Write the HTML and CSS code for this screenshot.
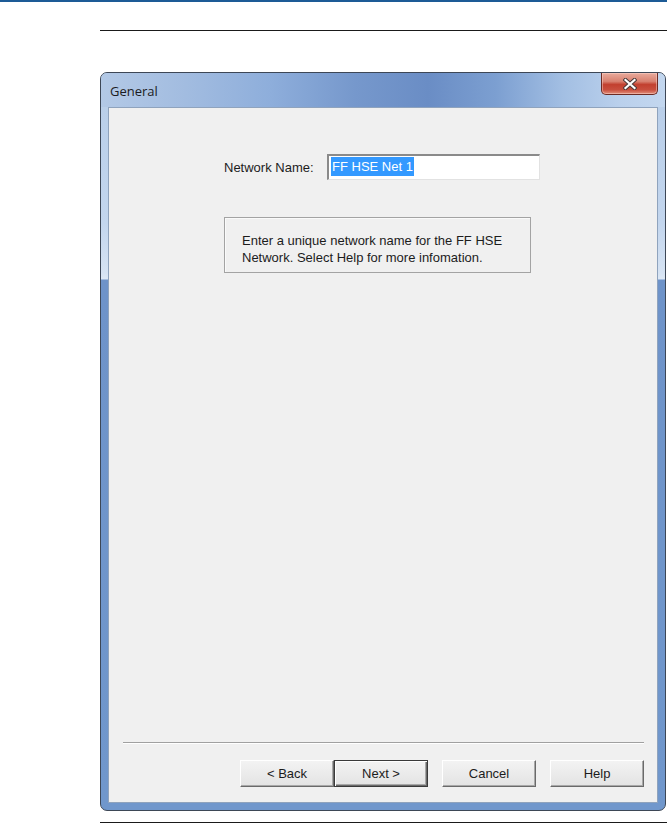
FILE: index.html
```html
<!DOCTYPE html>
<html>
<head>
<meta charset="utf-8">
<link rel="stylesheet" href="styles.css">
</head>
<body>
<div class="topbar"></div>
<div class="rule rule-top"></div>
<div class="window">
  <div class="titlebar">
    <span class="title">General</span>
    <div class="close">
      <svg width="14" height="12" viewBox="0 0 14 12">
        <path d="M2.5 2 L11.5 10 M11.5 2 L2.5 10" stroke="#4a3a3a" stroke-width="4.2" stroke-linecap="square" fill="none"/>
        <path d="M2.5 2 L11.5 10 M11.5 2 L2.5 10" stroke="#ffffff" stroke-width="2.2" stroke-linecap="square" fill="none"/>
      </svg>
    </div>
  </div>
  <div class="client">
    <div class="content">
      <div class="name-row">
        <label class="label">Network Name:</label>
        <div class="textbox"><span class="sel">FF HSE Net 1</span></div>
      </div>
      <div class="info">Enter a unique network name for the FF HSE<br>Network. Select Help for more infomation.</div>
    </div>
    <div class="footer">
      <div class="separator"></div>
      <div class="buttons">
        <div class="pair">
          <button class="btn">&lt; Back</button>
          <button class="btn default">Next &gt;</button>
        </div>
        <button class="btn">Cancel</button>
        <button class="btn">Help</button>
      </div>
    </div>
  </div>
</div>
<div class="rule rule-bottom"></div>
</body>
</html>
```

FILE: styles.css
```css
html, body {
  margin: 0;
  padding: 0;
  background: #ffffff;
}
body {
  width: 667px;
  height: 824px;
  overflow: hidden;
  font-family: "Liberation Sans", Arial, sans-serif;
  color: #1c1c1c;
}
.topbar {
  height: 2px;
  background: #1d5b96;
}
.rule {
  height: 1px;
  background: #1a1a1a;
  margin-left: 100px;
}
.rule-top {
  margin-top: 28px;
}
.rule-bottom {
  margin-top: 11px;
}
.window {
  margin: 41px 0 0 100px;
  width: 564px;
  height: 737px;
  border: 1px solid #3d4756;
  border-radius: 7px;
  display: flex;
  flex-direction: column;
  background: linear-gradient(to bottom, #b7cde8 0px, #c3d6ee 150px, #d6e3f3 200px, #dde8f5 206px, #6e93c9 207px, #7097cc 100%);
  overflow: hidden;
}
.titlebar {
  height: 34px;
  flex: none;
  display: flex;
  align-items: flex-start;
  justify-content: space-between;
  background: linear-gradient(to right, #b3c9e6 0%, #a2bce0 15%, #8eaedb 30%, #7698cc 45%, #6a8dc5 58%, #7c9fd1 70%, #a3bfe3 82%, #bad0ec 92%, #c3d7ef 100%);
}
.title {
  font-family: "Open Sans", "Liberation Sans", sans-serif;
  font-size: 13px;
  color: #1b1b22;
  margin: 9px 0 0 9px;
  line-height: 18px;
}
.close {
  width: 57px;
  height: 22px;
  margin-right: 7px;
  box-sizing: border-box;
  border: 1px solid #6c2b24;
  border-top: none;
  border-radius: 0 0 5px 5px;
  background: linear-gradient(to bottom, #e9ab9d 0%, #d88170 40%, #c2402f 55%, #c84f3e 80%, #e2907c 100%);
  box-shadow: inset 0 0 0 1px rgba(255, 220, 210, 0.45);
  display: flex;
  align-items: center;
  justify-content: center;
}
.client {
  flex: 1;
  margin: 0 7px 7px 7px;
  border: 1px solid #8fa3bd;
  background: #f0f0f0;
  display: flex;
  flex-direction: column;
  justify-content: space-between;
}
.content {
  padding: 46px 0 0 115px;
  font-size: 13px;
}
.name-row {
  display: grid;
  grid-template-columns: 103px 213px;
  align-items: center;
}
.label {
  font-size: 13px;
  color: #1c1c1c;
}
.textbox {
  height: 26px;
  box-sizing: border-box;
  background: #ffffff;
  border-top: 2px solid #8a8a8a;
  border-left: 2px solid #8a8a8a;
  border-right: 1px solid #e2e2e2;
  border-bottom: 1px solid #e2e2e2;
  padding: 1px 0 0 2px;
  display: flex;
  align-items: flex-start;
}
.sel {
  background: #3399ff;
  color: #ffffff;
  font-size: 13px;
  line-height: 19px;
  padding: 0 1px;
}
.info {
  margin-top: 37px;
  width: 307px;
  height: 56px;
  box-sizing: border-box;
  border: 1px solid #a3a3a3;
  box-shadow: inset 1px 1px 0 #fafafa;
  padding: 14px 0 0 17px;
  font-size: 13px;
  line-height: 17px;
  color: #1c1c1c;
}
.footer {
  padding: 0 13px 15px 14px;
}
.separator {
  height: 1px;
  background: #a0a0a0;
  border-bottom: 1px solid #ffffff;
}
.buttons {
  margin-top: 16px;
  display: flex;
  justify-content: flex-end;
  gap: 14px;
}
.pair {
  display: flex;
}
.btn {
  width: 94px;
  height: 27px;
  box-sizing: border-box;
  font-family: "Liberation Sans", Arial, sans-serif;
  font-size: 13px;
  color: #1c1c1c;
  background: linear-gradient(to bottom, #f3f3f3 0%, #ebebeb 50%, #e3e3e3 100%);
  border-top: 1px solid #ffffff;
  border-left: 1px solid #ffffff;
  border-right: 1px solid #6a6a6a;
  border-bottom: 1px solid #6a6a6a;
  box-shadow: inset -1px -1px 0 #a8a8a8;
  padding: 0;
  margin: 0;
}
.btn.default {
  border: 1px solid #3a3a3a;
  box-shadow: inset 1px 1px 0 #ffffff, inset -1px -1px 0 #6a6a6a, inset -2px -2px 0 #a8a8a8;
}
```
